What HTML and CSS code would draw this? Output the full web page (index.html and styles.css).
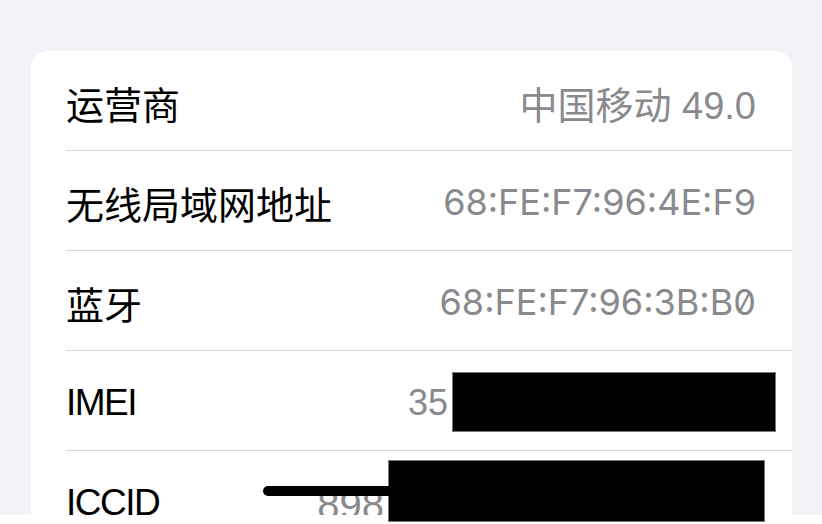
FILE: index.html
```html
<!DOCTYPE html>
<html lang="zh-CN">
<head>
    <meta charset="UTF-8">
    <meta name="viewport" content="width=device-width, initial-scale=1.0">
    <title>关于本机</title>
    <link rel="stylesheet" href="styles.css">
</head>
<body>

    <div class="page">
        <div class="screen">
            <div class="card">
                <div class="row">
                    <span class="label">运营商</span>
                    <span class="value carrier">中国移动 49.0</span>
                </div>
                <div class="row">
                    <span class="label">无线局域网地址</span>
                    <span class="value mac">68:FE:F7:96:4E:F9</span>
                </div>
                <div class="row">
                    <span class="label">蓝牙</span>
                    <span class="value mac zero">68:FE:F7:96:3B:B0</span>
                </div>
                <div class="row">
                    <span class="label latin">IMEI</span>
                    <span class="value latin imei">35</span>
                </div>
                <div class="row">
                    <span class="label latin">ICCID</span>
                    <span class="value latin iccid">898</span>
                </div>
            </div>
        </div>

        <!-- redactions drawn over the screenshot -->
        <div class="redact box-imei"></div>
        <div class="redact box-iccid"></div>
        <div class="redact stroke"></div>
    </div>

</body>
</html>
```

FILE: styles.css
```css
body {
    margin: 0;
    background: #fff;
    font-family: 'Inter', 'Noto Sans CJK SC', sans-serif;
}
.page {
    position: relative;
    width: 822px;
    height: 524px;
    overflow: hidden;
}
.screen {
    height: 515px;
    background: #f2f2f7;
    padding: 51px 30px 0 31px;
    box-sizing: border-box;
    overflow: hidden;
}
.card {
    background: #fff;
    border-radius: 17px 17px 0 0;
    padding-left: 35px;
}
.row {
    height: 99px;
    border-bottom: 1px solid #d8d8dc;
    display: flex;
    align-items: center;
    justify-content: space-between;
    padding-right: 36px;
}
.label {
    font-family: 'Noto Sans CJK SC', sans-serif;
    font-size: 38px;
    color: #000;
    padding-top: 4px;
}
.value {
    font-size: 38px;
    color: #8a8a8e;
}
.carrier {
    font-family: 'Liberation Sans', 'Noto Sans CJK SC', sans-serif;
    padding-top: 4px;
}
.mac {
    font-family: 'Inter', sans-serif;
    font-size: 36px;
    letter-spacing: 0;
    padding-top: 2px;
}
.zero {
    font-feature-settings: "zero" 1;
}
.latin {
    font-family: 'Liberation Sans', sans-serif;
    font-size: 37px;
    padding-top: 4px;
}
.label.latin {
    letter-spacing: -1.5px;
}
.value.latin {
    font-size: 36px;
}
.imei {
    margin-right: 308px;
}
.value.iccid {
    font-size: 40px;
    margin-right: 372px;
    padding-top: 10px;
}
.redact {
    position: absolute;
    background: #000;
}
.box-imei {
    left: 452px;
    top: 372px;
    width: 322px;
    height: 58px;
    border: 1px solid #777;
}
.box-iccid {
    left: 388px;
    top: 460px;
    width: 375px;
    height: 60px;
    border: 1px solid #777;
}
.stroke {
    left: 263px;
    top: 486px;
    width: 130px;
    height: 10px;
    border-radius: 5px 0 0 5px;
}
```
